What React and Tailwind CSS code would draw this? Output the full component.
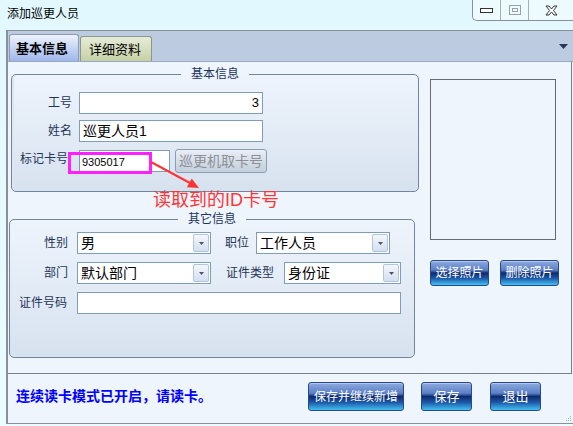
import React from 'react';

const BLUE_BTN =
  'flex items-center justify-center rounded-[3px] border border-[#27498a] bg-[linear-gradient(to_bottom,#8eaade_0%,#5b7fc6_38%,#0d2b6e_50%,#1d58a8_72%,#42c2f2_100%)] text-[12px] leading-none text-white shadow-[inset_0_1px_0_rgba(255,255,255,0.35)]';

function Select({ value, className }) {
  return (
    <div className={`flex h-[22px] items-center border border-[#7f9db9] bg-white ${className}`}>
      <span className="flex-1 truncate pl-[3px] text-[14px] leading-none text-black">{value}</span>
      <span className="mr-[1px] flex h-[18px] w-[16px] items-center justify-center rounded-[2px] border border-[#b3c4dc] bg-gradient-to-b from-[#f4f7fc] to-[#d3dff0]">
        <svg width="5" height="3" viewBox="0 0 5 3">
          <path d="M0 0h5L2.5 3z" fill="#4b5567" />
        </svg>
      </span>
    </div>
  );
}

function Input({ value, className, right }) {
  return (
    <div
      className={`flex h-[22px] items-center border border-[#7f9db9] bg-white px-[3px] text-black ${right ? 'justify-end' : ''} ${className}`}
    >
      {value}
    </div>
  );
}

export default function App() {
  return (
    <div className="relative h-[426px] w-[573px] overflow-hidden bg-gradient-to-b from-[#e2f8ff] to-[#eafcff] font-['Liberation_Sans','Noto_Sans_CJK_SC',sans-serif]">
      {/* title bar */}
      <div className="flex h-[30px] items-start justify-between">
        <span className="pl-[7px] pt-[7px] text-[12px] leading-[14px] text-black">添加巡更人员</span>
        <div className="flex h-[21px] w-[101px] rounded-bl-[5px] border-b border-l border-[#8a9098] bg-white/40">
          <div className="flex w-[28px] items-center justify-center border-r border-[#a8aeb5]">
            <svg width="13" height="5" viewBox="0 0 13 5">
              <rect x="0.5" y="0.5" width="12" height="4" fill="#fff" stroke="#333" />
            </svg>
          </div>
          <div className="flex w-[28px] items-center justify-center border-r border-[#a8aeb5]">
            <svg width="12" height="10" viewBox="0 0 12 10">
              <rect x="0.5" y="0.5" width="11" height="9" fill="none" stroke="#9aa0a8" />
              <rect x="3.5" y="3.5" width="5" height="3" fill="none" stroke="#9aa0a8" />
            </svg>
          </div>
          <div className="flex flex-1 items-center justify-center">
            <svg width="13" height="11" viewBox="0 0 13 11">
              <path
                d="M1 1h3l2.5 3L9 1h3L8.5 5.5 12 10H9L6.5 7 4 10H1l3.5-4.5z"
                fill="#fff"
                stroke="#333"
                strokeLinejoin="round"
              />
            </svg>
          </div>
        </div>
      </div>

      {/* dialog body */}
      <div className="ml-[6px] h-[394px] border-t border-b border-l-2 border-[#8a9099] bg-[#eef5fd]">
        {/* tab strip */}
        <div className="flex h-[31px] items-end border-b border-[#97a9c4] bg-[#bccbe0] pl-[1px]">
          <div className="flex h-[27px] w-[70px] items-center rounded-t-[3px] border border-b-0 border-[#8c9bb3] bg-gradient-to-b from-[#eef3fc] to-[#9fb6ea] pl-[6px] text-[13px] font-bold leading-none text-black">
            基本信息
          </div>
          <div className="ml-[1px] flex h-[25px] w-[72px] items-center rounded-t-[3px] border border-b-0 border-[#8d9688] bg-gradient-to-b from-[#e6ecd8] to-[#c5d1a4] pl-[8px] text-[13px] leading-none text-black">
            详细资料
          </div>
          <div className="ml-auto mr-[5px] self-center">
            <svg width="9" height="5" viewBox="0 0 9 5">
              <path d="M0 0h9L4.5 5z" fill="#23385c" />
            </svg>
          </div>
        </div>

        {/* content */}
        <div className="relative mr-[1px] flex h-[312px] border-b border-r border-[#7b7f85] pt-[4px]">
          <div className="w-[412px] shrink-0">
            <fieldset className="ml-[3px] w-[408px] rounded-[5px] border border-[#74849c] bg-gradient-to-b from-[#eef4fc] to-[#d7e2ef] px-0 pt-[10px] pb-[18px] shadow-[inset_2px_0_0_#dfe6ef]">
              <legend align="center" className="mx-auto px-[10px] text-[12px] leading-[16px] text-[#1b3460]">
                基本信息
              </legend>
              <div className="flex h-[22px] items-center">
                <span className="w-[60px] text-right text-[12px] text-[#1f3556]">工号</span>
                <Input value="3" right className="ml-[7px] w-[184px] text-[13px]" />
              </div>
              <div className="mt-[6px] flex h-[22px] items-center">
                <span className="w-[60px] text-right text-[12px] text-[#1f3556]">姓名</span>
                <Input value="巡更人员1" className="ml-[7px] w-[184px] text-[14px]" />
              </div>
              <div className="mt-[7px] flex h-[24px] items-center">
                <span className="w-[56px] pb-[4px] text-right text-[12px] text-[#1f3556]">标记卡号</span>
                <Input value="" className="ml-[11px] w-[91px]" />
                <button className="ml-[5px] flex h-[24px] w-[92px] items-center justify-center rounded-[3px] border border-[#8c9db3] bg-gradient-to-b from-[#e9eef5] to-[#c3cfdc] text-[14px] leading-none text-[#8b8f96]">
                  巡更机取卡号
                </button>
              </div>
            </fieldset>

            <fieldset className="mt-[19px] ml-[1px] w-[406px] rounded-[5px] border border-[#74849c] bg-gradient-to-b from-[#eef4fc] to-[#d7e2ef] px-0 pt-[5px] pb-[43px]">
              <legend align="center" className="mx-auto px-[10px] text-[12px] leading-[16px] text-[#1b3460]">
                其它信息
              </legend>
              <div className="flex h-[22px] items-center">
                <span className="w-[58px] text-right text-[12px] text-[#1f3556]">性别</span>
                <Select value="男" className="ml-[9px] w-[134px]" />
                <span className="ml-[14px] text-[12px] text-[#1f3556]">职位</span>
                <Select value="工作人员" className="ml-[7px] w-[134px]" />
              </div>
              <div className="mt-[8px] flex h-[22px] items-center">
                <span className="w-[58px] text-right text-[12px] text-[#1f3556]">部门</span>
                <Select value="默认部门" className="ml-[9px] w-[134px]" />
                <span className="ml-[15px] text-[12px] text-[#1f3556]">证件类型</span>
                <Select value="身份证" className="ml-[10px] w-[117px]" />
              </div>
              <div className="mt-[8px] flex h-[22px] items-center">
                <span className="w-[57px] text-right text-[12px] text-[#1f3556]">证件号码</span>
                <Input value="" className="ml-[10px] w-[324px]" />
              </div>
            </fieldset>
          </div>

          <div className="ml-[10px] pt-[13px]">
            <div className="h-[161px] w-[126px] border border-[#666a70] bg-[#eef5fd]" />
            <div className="mt-[20px] flex gap-[11px]">
              <button className={`${BLUE_BTN} h-[26px] w-[59px]`}>选择照片</button>
              <button className={`${BLUE_BTN} h-[26px] w-[59px]`}>删除照片</button>
            </div>
          </div>

          {/* annotation overlay */}
          <div className="pointer-events-none absolute left-[60px] top-[90px] h-[22px] w-[84px] border-[3px] border-[#ff1fff]" />
          <span className="pointer-events-none absolute left-[74px] top-[93px] text-[11px] leading-[14px] text-black">
            9305017
          </span>
          <svg className="pointer-events-none absolute left-[137px] top-[93px]" width="60" height="40" viewBox="0 0 60 40">
            <line x1="6" y1="7" x2="45" y2="28" stroke="#ff3333" strokeWidth="2" />
            <path d="M54 33L41.9 32.2L46.7 23.4z" fill="#ff3333" />
          </svg>
          <span className="pointer-events-none absolute left-[145px] top-[127px] text-[18px] leading-[22px] text-[#ff3636]">
            读取到的ID卡号
          </span>
        </div>

        {/* bottom bar */}
        <div className="relative flex h-[49px] items-start pl-[8px] pt-[8px]">
          <span className="mt-[6px] w-[292px] shrink-0 text-[14px] font-bold leading-[16px] text-[#0000ff]">
            连续读卡模式已开启，请读卡。
          </span>
          <button className={`${BLUE_BTN} h-[29px] w-[96px]`}>保存并继续新增</button>
          <button className={`${BLUE_BTN} ml-[17px] h-[29px] w-[51px] text-[13px]`}>保存</button>
          <button className={`${BLUE_BTN} ml-[18px] h-[29px] w-[51px] text-[13px]`}>退出</button>
          <svg className="absolute bottom-[1px] right-[1px]" width="6" height="6" viewBox="0 0 6 6">
            <rect x="4" y="0" width="1" height="1" fill="#9aa" />
            <rect x="2" y="2" width="1" height="1" fill="#9aa" />
            <rect x="4" y="2" width="1" height="1" fill="#9aa" />
            <rect x="0" y="4" width="1" height="1" fill="#9aa" />
            <rect x="2" y="4" width="1" height="1" fill="#9aa" />
            <rect x="4" y="4" width="1" height="1" fill="#9aa" />
          </svg>
        </div>
      </div>
    </div>
  );
}
